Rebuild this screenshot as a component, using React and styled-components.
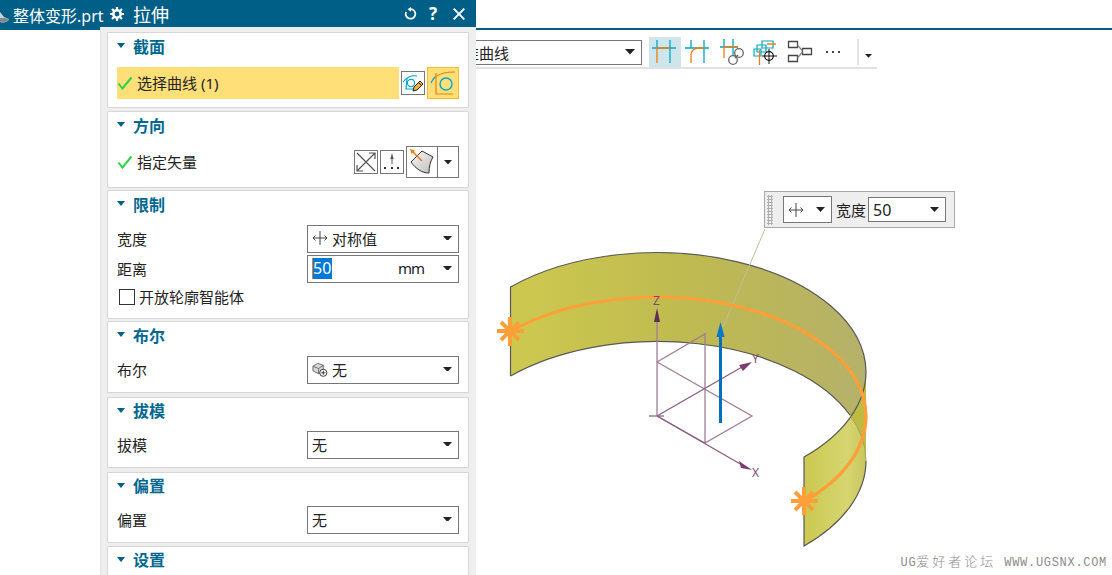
import styled, { createGlobalStyle } from "styled-components";

const GlobalStyle = createGlobalStyle`
    html, body {
        margin: 0;
        padding: 0;
        background: #fff;
        overflow: hidden;
    }
    * {
        box-sizing: border-box;
    }
`;

const TEAL = "#005f87";
const CYAN = "#00a7c8";
const ORANGE = "#ee7d11";

const Caret = ({ size = 9 }) => (
    <CaretMark width={size} height={size * 0.55} viewBox="0 0 10 5.5">
        <path d="M0 0h10L5 5.5z" fill="#222" />
    </CaretMark>
);

const Check = () => (
    <svg width="16" height="14" viewBox="0 0 16 14">
        <path d="M1.5 7.5 5.5 12.5 14.5 1.5" fill="none" stroke="#2fd14a" strokeWidth="2" />
    </svg>
);

const SymmetricIcon = () => (
    <svg width="16" height="14" viewBox="0 0 16 14">
        <path d="M8 0v14M1 7h14M3.5 4.5 1 7l2.5 2.5M12.5 4.5 15 7l-2.5 2.5" fill="none" stroke="#444" strokeWidth="1" />
    </svg>
);

const BooleanIcon = () => (
    <svg width="16" height="17" viewBox="0 0 17 17">
        <path d="M1 5 6 2l6 2v6l-5 3-6-3z" fill="#d9d9d9" stroke="#666" />
        <path d="M1 5l6 2.5V13M7 7.5 12 4" fill="none" stroke="#666" />
        <circle cx="12" cy="12" r="3.8" fill="#fff" stroke="#333" />
        <path d="M12 9.8v4.4M9.8 12h4.4" stroke="#333" />
    </svg>
);

const SectionEditIcon = () => (
    <svg width="22" height="22" viewBox="0 0 22 22">
        <path d="M1 10c3-5 9-7 14-6" fill="none" stroke={CYAN} strokeWidth="1.2" />
        <path d="M5 6 4 17h7" fill="none" stroke={CYAN} strokeWidth="1.2" />
        <circle cx="9" cy="11" r="3.6" fill="none" stroke={CYAN} strokeWidth="1.2" />
        <path d="M11 19l1-4 6-6 3 3-6 6z" fill="#f0b040" stroke="#222" strokeWidth="1" />
        <path d="M16.5 10.5l3 3" stroke="#222" />
    </svg>
);

const CurveIcon = () => (
    <svg width="28" height="28" viewBox="0 0 28 28">
        <path d="M2 14C3 12 4 10 6 8" fill="none" stroke={CYAN} strokeWidth="1.2" />
        <path d="M6 8C11 4 18 3 26 3" fill="none" stroke={ORANGE} strokeWidth="1.2" />
        <path d="M7 4v21h17" fill="none" stroke={ORANGE} strokeWidth="1.2" />
        <circle cx="17" cy="15" r="6" fill="none" stroke={CYAN} strokeWidth="1.4" />
    </svg>
);

const ReverseIcon = () => (
    <svg width="22" height="22" viewBox="0 0 22 22">
        <path d="M2 2l18 18M20 2 2 20M14 2h6v6M2 14v6h6" fill="none" stroke="#555" strokeWidth="1.2" />
    </svg>
);

const NormalIcon = () => (
    <svg width="22" height="22" viewBox="0 0 22 22">
        <path d="M11 6v7" stroke="#555" />
        <path d="M11 2 9.3 8h3.4z" fill="#555" />
        <path d="M3 17h2M10 17h2M16 17h2" stroke="#333" strokeWidth="2" />
    </svg>
);

const VectorIcon = () => (
    <svg width="26" height="28" viewBox="0 0 26 28">
        <defs>
            <linearGradient id="sheet" x1="0" x2="1" y1="0" y2="1">
                <stop offset="0" stopColor="#fafafa" />
                <stop offset="1" stopColor="#bdbdbd" />
            </linearGradient>
        </defs>
        <path d="M2 14 13 3l11 6c-3 5-4 10-4 16-7 0-13-4-18-11z" fill="url(#sheet)" stroke="#333" />
        <path d="M3 3l10 10" stroke={ORANGE} strokeWidth="1.6" />
        <path d="M1 1l5 1.5-3.5 3.5z" fill={ORANGE} />
    </svg>
);

// the toolbar icons use page coordinates in their viewBox
const SnapIcon = ({ kind }) => {
    if (kind === "corner") {
        return (
            <svg width="28" height="28" viewBox="683 38 28 28">
                <path d="M685 48h24M691 40v8M704 40v23" fill="none" stroke={CYAN} strokeWidth="1.3" />
                <path d="M691 63V55c0-4 3-7 7-7h6" fill="none" stroke={ORANGE} strokeWidth="1.3" />
            </svg>
        );
    }
    if (kind === "link") {
        return (
            <svg width="28" height="28" viewBox="718 38 28 28">
                <path d="M720 47h18M724 39v8M733 39v16" fill="none" stroke={CYAN} strokeWidth="1.3" />
                <path d="M724 58V47h14" fill="none" stroke={ORANGE} strokeWidth="1.3" />
                <circle cx="733" cy="60" r="4.3" fill="#fff" stroke="#666" strokeWidth="1.3" />
                <circle cx="739" cy="53" r="4.3" fill="#fff" stroke="#666" strokeWidth="1.3" />
                <path d="M735 58l3-3" stroke="#666" strokeWidth="1.4" />
            </svg>
        );
    }
    if (kind === "cross") {
        return (
            <svg width="28" height="28" viewBox="752 38 28 28">
                <path d="M762 47V41h11v7h-11zM757 52v-7h9v7zM754 56v-7h7v7z" fill="none" stroke={CYAN} strokeWidth="1.2" />
                <path d="M767 44h9M759.5 50v15" fill="none" stroke={ORANGE} strokeWidth="1.3" />
                <circle cx="769" cy="56" r="4.3" fill="none" stroke="#111" strokeWidth="1.2" />
                <path d="M769 49v15M762 56h15" stroke="#111" strokeWidth="1" />
            </svg>
        );
    }
    return (
        <svg width="28" height="28" viewBox="651 38 28 28">
            <path d="M652 48h24M657 40v8M670 40v23" fill="none" stroke={CYAN} strokeWidth="1.3" />
            <path d="M657 63V48h13" fill="none" stroke={ORANGE} strokeWidth="1.3" />
        </svg>
    );
};

const FlowIcon = () => (
    <svg width="28" height="28" viewBox="786 38 28 28">
        <path d="M788.5 41.5h9v6h-9zM802.5 48.5h9v6h-9zM788.5 55.5h9v6h-9z" fill="#fff" stroke="#444" strokeWidth="1.3" />
        <path d="M797.5 45l5 6M797.5 58l5-6" stroke="#888" strokeWidth="1.2" />
    </svg>
);

const DotsIcon = () => (
    <svg width="16" height="4" viewBox="0 0 16 4">
        <path d="M1 2h2M7 2h2M13 2h2" stroke="#444" strokeWidth="2" />
    </svg>
);

const Stage = () => (
    <Drawing viewBox="476 69 636 506">
        <defs>
            <linearGradient id="backFace" x1="510" x2="866" y1="0" y2="0" gradientUnits="userSpaceOnUse">
                <stop offset="0" stopColor="#cdc94f" />
                <stop offset="0.5" stopColor="#bfba50" />
                <stop offset="1" stopColor="#b5b16a" />
            </linearGradient>
            <linearGradient id="frontFace" x1="804" x2="866" y1="0" y2="0" gradientUnits="userSpaceOnUse">
                <stop offset="0" stopColor="#cbc950" />
                <stop offset="0.7" stopColor="#d6d570" />
                <stop offset="1" stopColor="#c9c65c" />
            </linearGradient>
        </defs>
        <path d="M510.5 287A209 120 0 0 1 866 372V461A209 120 0 0 0 510.5 376Z" fill="url(#backFace)" />
        <path d="M866 372A209 120 0 0 1 804 457V546A209 120 0 0 0 866 461Z" fill="url(#frontFace)" />
        <path d="M850 416A209 120 0 0 1 866 461V372A209 120 0 0 1 850 418Z" fill="#bfba42" />
        <g fill="none" stroke="#585858" strokeWidth="1.2">
            <path d="M510.5 376V287A209 120 0 0 1 866 372A209 120 0 0 1 804 457V546A209 120 0 0 0 866 461" />
            <path d="M510.5 376A209 120 0 0 1 850 415" />
        </g>
        <path d="M850 415A209 120 0 0 1 866 461" fill="none" stroke="#a8a65a" strokeWidth="1" />
        <g fill="none" stroke="#a07e97" strokeWidth="1.3">
            <path d="M657 322V416M657 362 705 334V443M657 362 752 416 705 443 657 416M649 416H664" />
        </g>
        <path d="M657 416 742 367M657 416 742 465" fill="none" stroke="#8a5c80" strokeWidth="1.3" />
        <path d="M657 308 654 322H660Z" fill="#5f2d55" />
        <path d="M752 362 739 365 743 371Z" fill="#7a3f6c" />
        <path d="M752 470 739 461 741 468Z" fill="#7a3f6c" />
        <path d="M765 229 723 327" fill="none" stroke="#c4bc98" strokeWidth="1" />
        <path d="M720.5 423V336" fill="none" stroke="#0070c0" strokeWidth="3" />
        <path d="M720.5 322 716.5 337H724.5Z" fill="#0a78c8" />
        <path d="M510.5 331.5A209 120 0 0 1 866 416.5A209 120 0 0 1 804 501.5" fill="none" stroke="#ff9f3a" strokeWidth="3.2" />
        <g fill="none" stroke="#ff9f3a" strokeWidth="4">
            <path d="M510 317V346M497 331H524M501 322 519 340M519 322 501 340" />
            <path d="M804 487V515M791 501H818M795 492 813 510M813 492 795 510" />
        </g>
    </Drawing>
);

const Select = ({ icon, value, unit, editing }) => (
    <SelectBox>
        {icon}
        {editing ? <Selected>{value}</Selected> : <SelectText>{value}</SelectText>}
        {unit && <Unit>{unit}</Unit>}
        <Caret size={9} />
    </SelectBox>
);

const Section = ({ title, top, height, mt, children }) => (
    <Card $height={height} $mt={mt}>
        <CardHead $extra={top}>
            <Triangle />
            <CardTitle>{title}</CardTitle>
        </CardHead>
        {children}
    </Card>
);

const App = () => {
    const snaps = [
        { kind: "plain", width: 32 },
        { kind: "corner", width: 32 },
        { kind: "link", width: 38 },
        { kind: "cross", width: 30 },
    ];

    return (
        <Page>
            <GlobalStyle />
            <LeftColumn>
                <FileTab>
                    <FileIcon viewBox="0 0 9 11">
                        <path d="M0 0 4 5 9 7 8 9 3 11 0 10Z" fill="#c9d3d8" />
                        <path d="M0 6 5 6 9 7 8 9 3 11 0 10Z" fill="#7f8c92" />
                    </FileIcon>
                    整体变形.prt
                </FileTab>
            </LeftColumn>
            <Dialog>
                <TitleBar>
                    <svg width="14" height="14" viewBox="0 0 14 14">
                        <circle cx="7" cy="7" r="3.7" fill="none" stroke="#fff" strokeWidth="2.6" />
                        <path d="M7 0v2.5M7 11.5V14M0 7h2.5M11.5 7H14M2 2l1.8 1.8M10.2 10.2 12 12M12 2l-1.8 1.8M3.8 10.2 2 12" stroke="#fff" strokeWidth="2.2" />
                    </svg>
                    <DialogName>拉伸</DialogName>
                    <TitleTools>
                        <svg width="13" height="13" viewBox="0 0 14 14">
                            <path d="M7 2.2a5.2 5.2 0 1 1-4.7 3" fill="none" stroke="#fff" strokeWidth="1.9" />
                            <path d="M7.5 0v5L3.8 2.3z" fill="#fff" />
                        </svg>
                        <HelpMark>?</HelpMark>
                        <svg width="12" height="12" viewBox="0 0 12 12">
                            <path d="M.7.7l10.6 10.6M11.3.7.7 11.3" stroke="#fff" strokeWidth="1.9" />
                        </svg>
                    </TitleTools>
                </TitleBar>
                <DialogBody>
                    <Section title="截面" top height={76} mt={5}>
                        <PickRow>
                            <PickField>
                                <Check />
                                <RowLabel>选择曲线 (1)</RowLabel>
                            </PickField>
                            <ToolButton><SectionEditIcon /></ToolButton>
                            <ActiveTool><CurveIcon /></ActiveTool>
                        </PickRow>
                    </Section>
                    <Section title="方向" top height={77} mt={3}>
                        <PickRow>
                            <PlainField>
                                <Check />
                                <RowLabel>指定矢量</RowLabel>
                            </PlainField>
                            <ToolButton><ReverseIcon /></ToolButton>
                            <ToolButton><NormalIcon /></ToolButton>
                            <SplitButton>
                                <SplitMain><VectorIcon /></SplitMain>
                                <SplitCaret><Caret size={8} /></SplitCaret>
                            </SplitButton>
                        </PickRow>
                    </Section>
                    <Section title="限制" top height={129} mt={2}>
                        <FieldRow>
                            <RowLabel>宽度</RowLabel>
                            <Select icon={<SymmetricIcon />} value="对称值" />
                        </FieldRow>
                        <FieldRow $mt={2}>
                            <RowLabel>距离</RowLabel>
                            <Select value="50" unit="mm" editing />
                        </FieldRow>
                        <CheckRow>
                            <CheckBox />
                            开放轮廓智能体
                        </CheckRow>
                    </Section>
                    <Section title="布尔" top height={72} mt={2}>
                        <FieldRow>
                            <RowLabel>布尔</RowLabel>
                            <Select icon={<BooleanIcon />} value="无" />
                        </FieldRow>
                    </Section>
                    <Section title="拔模" height={71} mt={4}>
                        <FieldRow>
                            <RowLabel>拔模</RowLabel>
                            <Select value="无" />
                        </FieldRow>
                    </Section>
                    <Section title="偏置" height={71} mt={4}>
                        <FieldRow>
                            <RowLabel>偏置</RowLabel>
                            <Select value="无" />
                        </FieldRow>
                    </Section>
                    <Section title="设置" height={71} mt={3} />
                </DialogBody>
            </Dialog>
            <Workspace>
                <TopRule />
                <Toolbar>
                    <FilterSelect>
                        <FilterText>基准曲线</FilterText>
                        <Caret size={10} />
                    </FilterSelect>
                    <SnapGroup>
                        {snaps.map((snap, i) => (
                            <SnapButton key={snap.kind} $w={snap.width} $on={i === 0}>
                                <SnapIcon kind={snap.kind} />
                            </SnapButton>
                        ))}
                        <SnapButton $w={38}><FlowIcon /></SnapButton>
                        <SnapButton $w={28}><DotsIcon /></SnapButton>
                    </SnapGroup>
                    <ToolbarEnd>
                        <Caret size={7} />
                    </ToolbarEnd>
                </Toolbar>
                <Canvas>
                    <Stage />
                    <AxisLabel $x={177} $y={226}>Z</AxisLabel>
                    <AxisLabel $x={276} $y={284}>Y</AxisLabel>
                    <AxisLabel $x={276} $y={398}>X</AxisLabel>
                    <FloatBar>
                        <Gripper />
                        <FloatSelect $w={49} $h={27} $ml={10}>
                            <SymmetricIcon />
                            <Caret size={9} />
                        </FloatSelect>
                        <FloatLabel>宽度</FloatLabel>
                        <FloatSelect $w={78} $h={25} $ml={2}>
                            <FloatValue>50</FloatValue>
                            <Caret size={9} />
                        </FloatSelect>
                    </FloatBar>
                    <Watermark>UG<WatermarkHan>爱好者论坛</WatermarkHan> WWW.UGSNX.COM</Watermark>
                </Canvas>
            </Workspace>
        </Page>
    );
};

const Page = styled.div`
    display: flex;
    width: 1112px;
    height: 575px;
    overflow: hidden;
    font-family: "Noto Sans", "Noto Sans CJK SC", sans-serif;
    font-size: 15px;
    color: #222;
`;

const LeftColumn = styled.div`
    width: 100px;
    flex: none;
`;

const FileTab = styled.div`
    display: flex;
    align-items: center;
    height: 30px;
    padding-left: 13px;
    position: relative;
    background: ${TEAL};
    color: #fff;
    font-size: 16px;
    white-space: nowrap;
`;

const FileIcon = styled.svg`
    position: absolute;
    left: 0;
    top: 12px;
    width: 9px;
    height: 11px;
`;

const Dialog = styled.div`
    width: 376px;
    flex: none;
    display: flex;
    flex-direction: column;
`;

const TitleBar = styled.div`
    display: flex;
    align-items: center;
    height: 27px;
    flex: none;
    padding-left: 10px;
    background: ${TEAL};
    color: #fff;
`;

const DialogName = styled.span`
    margin-left: 9px;
    font-size: 18px;
`;

const TitleTools = styled.div`
    display: flex;
    align-items: center;
    margin-left: auto;
    padding-right: 11px;
`;

const HelpMark = styled.span`
    width: 12px;
    margin: 0 14px 0 10px;
    text-align: center;
    font-weight: 700;
    font-size: 17px;
`;

const DialogBody = styled.div`
    flex: 1;
    display: flex;
    flex-direction: column;
    padding: 0 7px;
    background: #eeeeee;
    box-shadow: inset 1px 0 0 #e2e2e2;
    overflow: hidden;
`;

const Card = styled.section`
    flex: none;
    height: ${(props) => props.$height}px;
    margin-top: ${(props) => props.$mt}px;
    padding: 0 9px;
    background: #fff;
    border: 1px solid #d6d6d6;
    border-radius: 1px;
`;

const CardHead = styled.header`
    display: flex;
    align-items: center;
    height: ${(props) => (props.$extra ? 34 : 33)}px;
    padding-bottom: 9px;
`;

const Triangle = styled.i`
    width: 0;
    height: 0;
    border-left: 4.5px solid transparent;
    border-right: 4.5px solid transparent;
    border-top: 5px solid ${TEAL};
`;

const CardTitle = styled.h3`
    margin: 0 0 0 8px;
    font-size: 16px;
    font-weight: 700;
    color: #00688f;
`;

const PickRow = styled.div`
    display: flex;
    align-items: center;
    justify-content: flex-end;
    gap: 2px;
    height: 32px;
`;

const PickField = styled.div`
    flex: 1;
    display: flex;
    align-items: center;
    gap: 4px;
    height: 32px;
    background: #ffdf78;
`;

const PlainField = styled(PickField)`
    background: none;
`;

const RowLabel = styled.span`
    padding-bottom: 2px;
`;

const ToolButton = styled.div`
    display: flex;
    align-items: center;
    justify-content: center;
    flex: none;
    width: 24px;
    height: 24px;
    background: #fff;
    border: 1px solid #777;
`;

const ActiveTool = styled(ToolButton)`
    width: 32px;
    height: 32px;
    background: #ffdf78;
    border-color: #f7b92f;
`;

const SplitButton = styled.div`
    display: flex;
    height: 32px;
    border: 1px solid #777;
`;

const SplitMain = styled.div`
    display: flex;
    align-items: center;
    justify-content: center;
    width: 31px;
    border-right: 1px solid #777;
`;

const SplitCaret = styled.div`
    display: flex;
    align-items: center;
    justify-content: center;
    width: 20px;
`;

const CaretMark = styled.svg`
    flex: none;
`;

const FieldRow = styled.div`
    display: flex;
    align-items: center;
    justify-content: space-between;
    margin-top: ${(props) => props.$mt || 0}px;
`;

const SelectBox = styled.div`
    display: flex;
    align-items: center;
    gap: 4px;
    width: 152px;
    height: 28px;
    padding: 0 6px 2px 4px;
    border: 1px solid #777;
`;

const SelectText = styled.span`
    flex: 1;
`;

const Selected = styled.span`
    height: 21px;
    padding: 0 1px 0 0;
    line-height: 21px;
    color: #fff;
    background: #0078d7;
    border-left: 1px solid ${ORANGE};
    font-size: 16px;
`;

const Unit = styled.span`
    margin-left: auto;
    margin-right: 15px;
    font-size: 15px;
    letter-spacing: -1px;
`;

const CheckRow = styled.label`
    display: flex;
    align-items: center;
    gap: 4px;
    margin-top: 3px;
    padding-left: 2px;
`;

const CheckBox = styled.i`
    width: 16px;
    height: 16px;
    border: 1px solid #333;
`;

const Workspace = styled.div`
    flex: 1;
    display: flex;
    flex-direction: column;
    min-width: 0;
`;

const TopRule = styled.div`
    height: 2px;
    margin-top: 28px;
    background: ${TEAL};
`;

const Toolbar = styled.div`
    display: flex;
    align-items: center;
    flex: none;
    width: 401px;
    height: 39px;
    padding-top: 7px;
    border-bottom: 2px solid #e2e2e2;
`;

const FilterSelect = styled.div`
    display: flex;
    align-items: center;
    justify-content: space-between;
    width: 166px;
    height: 25px;
    padding-right: 6px;
    overflow: hidden;
    border: 1px solid #777;
    border-left: none;
`;

const FilterText = styled.span`
    margin-left: -27px;
`;

const SnapGroup = styled.div`
    display: flex;
    align-items: center;
    margin-left: 7px;
`;

const SnapButton = styled.div`
    display: flex;
    align-items: center;
    justify-content: center;
    flex: none;
    width: ${(props) => props.$w}px;
    height: 30px;
    background: ${(props) => (props.$on ? "#cde5eb" : "transparent")};
`;

const ToolbarEnd = styled.div`
    display: flex;
    align-items: flex-end;
    justify-content: center;
    height: 26px;
    width: 20px;
    padding-bottom: 7px;
    margin-left: 10px;
    border-left: 2px solid #e2e2e2;
`;

const Canvas = styled.div`
    flex: 1;
    position: relative;
`;

const Drawing = styled.svg`
    display: block;
    width: 100%;
    height: 100%;
`;

const AxisLabel = styled.span`
    position: absolute;
    left: ${(props) => props.$x}px;
    top: ${(props) => props.$y}px;
    font-size: 12px;
    line-height: 12px;
    color: #7a4a70;
`;

const FloatBar = styled.div`
    position: absolute;
    left: 288px;
    top: 122px;
    display: flex;
    align-items: center;
    width: 191px;
    height: 37px;
    background: #eee;
    border: 1px solid #a8a8a8;
`;

const Gripper = styled.i`
    width: 6px;
    height: 30px;
    margin-left: 2px;
    background-image: radial-gradient(#b0b0b0 1px, transparent 1.2px);
    background-size: 3px 3px;
`;

const FloatSelect = styled.div`
    display: flex;
    align-items: center;
    justify-content: space-between;
    flex: none;
    width: ${(props) => props.$w}px;
    height: ${(props) => props.$h}px;
    padding: 0 6px 0 4px;
    margin-left: ${(props) => props.$ml}px;
    background: #fff;
    border: 1px solid #777;
`;

const FloatValue = styled.span`
    font-size: 16px;
`;

const FloatLabel = styled.span`
    margin-left: 4px;
    white-space: nowrap;
`;

const Watermark = styled.div`
    position: absolute;
    right: 5px;
    bottom: 5px;
    font-family: "Liberation Mono", "Noto Sans CJK SC", monospace;
    font-size: 12px;
    line-height: 14px;
    letter-spacing: 0.7px;
    color: #8d8d8d;
    white-space: nowrap;
`;

const WatermarkHan = styled.span`
    font-size: 13px;
    letter-spacing: 3px;
    font-weight: 300;
`;

export default App;
